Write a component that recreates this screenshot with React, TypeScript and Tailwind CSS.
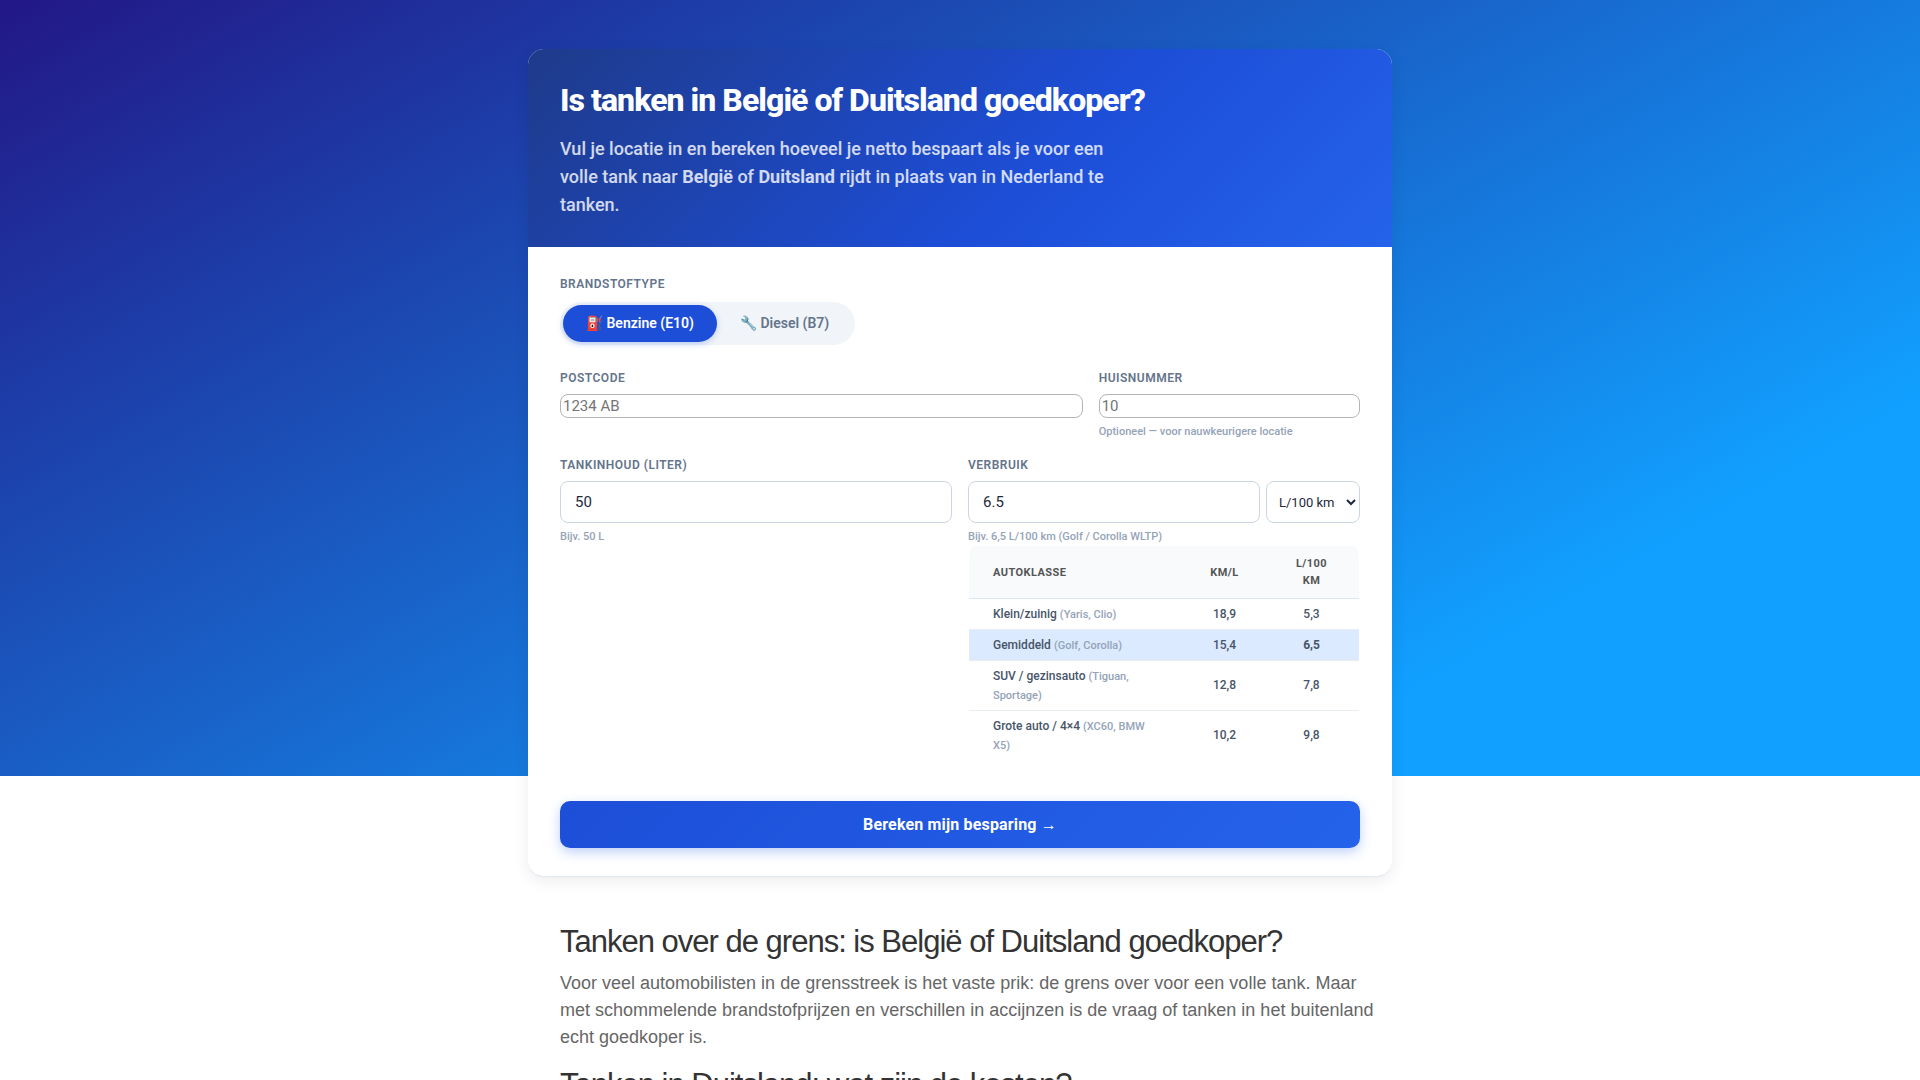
import { useState, type ReactNode } from "react";

type Fuel = "benzine" | "diesel";

const carClasses = [
  { name: "Klein/zuinig", models: "(Yaris, Clio)", kmPerLiter: "18,9", litersPer100: "5,3" },
  { name: "Gemiddeld", models: "(Golf, Corolla)", kmPerLiter: "15,4", litersPer100: "6,5", active: true },
  { name: "SUV / gezinsauto", models: "(Tiguan, Sportage)", kmPerLiter: "12,8", litersPer100: "7,8" },
  { name: "Grote auto / 4×4", models: "(XC60, BMW X5)", kmPerLiter: "10,2", litersPer100: "9,8" },
];

function Label({ htmlFor, children }: { htmlFor: string; children: ReactNode }) {
  return (
    <label htmlFor={htmlFor} className="mb-1.5 block text-xs leading-5 font-semibold tracking-[0.5px] text-[#64748b] uppercase">
      {children}
    </label>
  );
}

function Hint({ children }: { children: ReactNode }) {
  return <p className="mt-[5px] text-[11px] leading-[18px] font-medium text-[#94a3b8]">{children}</p>;
}

function FuelToggle() {
  const [fuel, setFuel] = useState<Fuel>("benzine");
  const base = "rounded-full px-[23px] py-2 text-sm leading-[21px] font-semibold";
  const on = "bg-[#1d4ed8] text-white shadow-[0_2px_6px_rgba(29,78,216,0.25)]";
  const off = "text-[#64748b]";
  return (
    <fieldset>
      <legend className="mb-2 block text-xs leading-5 font-semibold tracking-[0.5px] text-[#64748b] uppercase">
        Brandstoftype
      </legend>
      <div className="inline-flex rounded-full bg-[#f1f5f9] p-[3px] align-top">
        <button type="button" onClick={() => setFuel("benzine")} className={`${base} ${fuel === "benzine" ? on : off}`}>
          ⛽ Benzine (E10)
        </button>
        <button type="button" onClick={() => setFuel("diesel")} className={`${base} ${fuel === "diesel" ? on : off}`}>
          🔧 Diesel (B7)
        </button>
      </div>
    </fieldset>
  );
}

function ConsumptionTable() {
  return (
    <div className="overflow-hidden rounded-lg border-x border-transparent">
      <table className="w-full table-fixed border-collapse text-xs font-medium text-[#475569]">
        <thead>
          <tr className="border-b border-[#dbe6f3] bg-[#f8fafc] text-[11px] leading-[17px] tracking-[0.04em] text-[#555] uppercase">
            <th className="w-[216px] px-6 py-[9px] text-left font-bold">Autoklasse</th>
            <th className="w-[79px] px-4 py-[9px] text-center font-bold">km/l</th>
            <th className="px-6 py-[9px] text-center font-bold">L/100 km</th>
          </tr>
        </thead>
        <tbody>
          {carClasses.map((car) => (
            <tr
              key={car.name}
              className={`border-b border-[#e8edf2] leading-[19px] last:border-0 ${car.active ? "bg-[#dbeafe]" : ""}`}
            >
              <td className="px-6 pt-1.5 pb-[5px]">
                {car.name} <span className="text-[11px] text-[#94a3b8]">{car.models}</span>
              </td>
              <td className="text-center">{car.kmPerLiter}</td>
              <td className={car.active ? "text-center font-bold" : "text-center"}>{car.litersPer100}</td>
            </tr>
          ))}
        </tbody>
      </table>
    </div>
  );
}

function Calculator() {
  const bare =
    "block h-6 w-full rounded-lg border border-[#b4b4b4] bg-white px-0.5 text-[15px] placeholder:text-[#757575]";
  const field =
    "block h-[42px] w-full min-w-0 rounded-lg border border-[#cbd5e1] bg-white px-3.5 text-[15px] text-[#1e293b]";
  return (
    <section className="overflow-hidden rounded-2xl border-b border-[#e2e8f0] bg-white font-[Roboto,sans-serif] shadow-[0_4px_16px_rgba(0,0,0,0.08)]">
      <header className="bg-[linear-gradient(135deg,#1e3a8a_0%,#1d4ed8_60%,#2563eb_100%)] px-8 pt-8 pb-7">
        <h1 className="mb-4 text-[32px] leading-[38px] font-extrabold tracking-[-0.03em] text-white">
          Is tanken in België of Duitsland goedkoper?
        </h1>
        <p className="max-w-[560px] text-[18px] leading-[28px] font-medium text-white/80">
          Vul je locatie in en bereken hoeveel je netto bespaart als je voor een volle tank naar{" "}
          <strong className="font-bold">België</strong> of <strong className="font-bold">Duitsland</strong> rijdt in plaats van
          in Nederland te tanken.
        </p>
      </header>

      <form className="px-8 pt-[27px] pb-7" onSubmit={(e) => e.preventDefault()}>
        <FuelToggle />

        <div className="mt-[23px] grid grid-cols-[2fr_1fr] gap-4">
          <div>
            <Label htmlFor="postcode">Postcode</Label>
            <input id="postcode" className={bare} placeholder="1234 AB" />
          </div>
          <div>
            <Label htmlFor="huisnummer">Huisnummer</Label>
            <input id="huisnummer" className={bare} placeholder="10" />
            <Hint>Optioneel — voor nauwkeurigere locatie</Hint>
          </div>
        </div>

        <div className="mt-3.5 grid grid-cols-2 gap-4">
          <div>
            <Label htmlFor="tankinhoud">Tankinhoud (liter)</Label>
            <input id="tankinhoud" className={field} defaultValue="50" />
            <Hint>Bijv. 50 L</Hint>
          </div>
          <div>
            <Label htmlFor="verbruik">Verbruik</Label>
            <div className="flex gap-1.5">
              <input id="verbruik" className={`${field} flex-1`} defaultValue="6.5" />
              <select
                aria-label="Eenheid"
                className="h-[42px] w-[94px] shrink-0 rounded-lg border border-[#cbd5e1] bg-white px-2 text-[13px] text-[#1e293b]"
              >
                <option>L/100 km</option>
                <option>km/L</option>
              </select>
            </div>
            <Hint>Bijv. 6,5 L/100 km (Golf / Corolla WLTP)</Hint>
            <ConsumptionTable />
          </div>
        </div>

        <button
          type="submit"
          className="mt-[41px] block w-full rounded-[10px] bg-[linear-gradient(135deg,#1d4ed8,#2563eb)] py-3 text-base leading-[23px] font-bold tracking-[0.01em] text-white shadow-[0_4px_12px_rgba(37,99,235,0.3)]"
        >
          Bereken mijn besparing →
        </button>
      </form>
    </section>
  );
}

function Article() {
  const heading = "text-[31px] leading-[42px] tracking-[-1px] text-[#333]";
  return (
    <article className="px-8 pt-11 font-['Liberation_Sans',sans-serif]">
      <h2 className={`mb-[7px] ${heading}`}>Tanken over de grens: is België of Duitsland goedkoper?</h2>
      <p className="-mr-4 mb-[13px] text-[18px] leading-[27px] text-[#666]">
        Voor veel automobilisten in de grensstreek is het vaste prik: de grens over voor een volle tank. Maar met schommelende
        brandstofprijzen en verschillen in accijnzen is de vraag of tanken in het buitenland echt goedkoper is.
      </p>
      <h2 className={heading}>Tanken in Duitsland: wat zijn de kosten?</h2>
    </article>
  );
}

export default function App() {
  return (
    <div className="relative min-h-screen bg-white">
      <div
        aria-hidden="true"
        className="absolute inset-x-0 top-0 h-[776px] bg-[linear-gradient(150deg,#221786_0%,#11a0ff_80%)]"
      />
      <main className="relative mx-auto max-w-[864px] pt-[49px]">
        <Calculator />
        <Article />
      </main>
    </div>
  );
}
